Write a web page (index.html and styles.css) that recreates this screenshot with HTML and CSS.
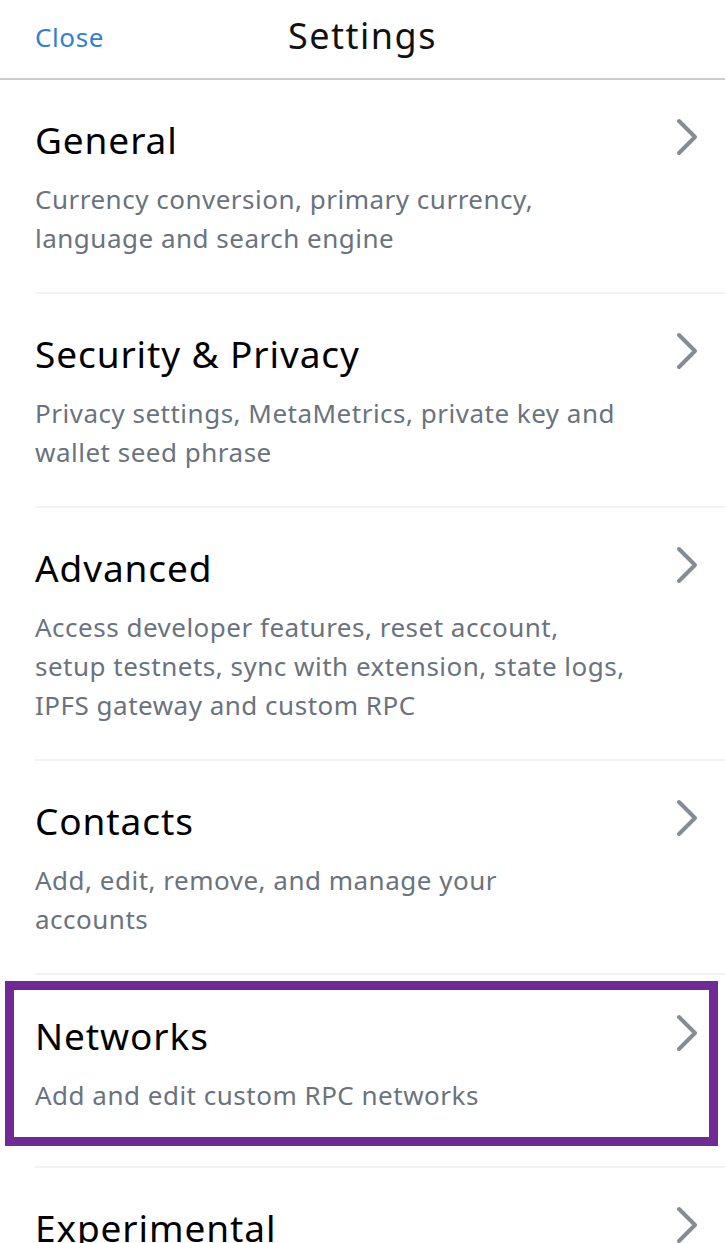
FILE: index.html
```html
<!DOCTYPE html>
<html lang="en">
<head>
<meta charset="utf-8">
<title>Settings</title>
<link rel="stylesheet" href="styles.css">
</head>
<body>
<div class="screen">
  <header class="topbar">
    <span class="close">Close</span>
    <h1 class="title">Settings</h1>
  </header>
  <main class="list">
    <div class="row">
      <div class="row-head">
        <span class="row-title">General</span>
        <svg class="chev" viewBox="0 0 24 40" width="24" height="40"><polyline points="4,4 20,20 4,36" fill="none" stroke="#848c96" stroke-width="4" stroke-linecap="round" stroke-linejoin="round"/></svg>
      </div>
      <p class="row-desc">Currency conversion, primary currency,<br>language and search engine</p>
    </div>
    <div class="row">
      <div class="row-head">
        <span class="row-title">Security &amp; Privacy</span>
        <svg class="chev" viewBox="0 0 24 40" width="24" height="40"><polyline points="4,4 20,20 4,36" fill="none" stroke="#848c96" stroke-width="4" stroke-linecap="round" stroke-linejoin="round"/></svg>
      </div>
      <p class="row-desc">Privacy settings, MetaMetrics, private key and<br>wallet seed phrase</p>
    </div>
    <div class="row">
      <div class="row-head">
        <span class="row-title">Advanced</span>
        <svg class="chev" viewBox="0 0 24 40" width="24" height="40"><polyline points="4,4 20,20 4,36" fill="none" stroke="#848c96" stroke-width="4" stroke-linecap="round" stroke-linejoin="round"/></svg>
      </div>
      <p class="row-desc">Access developer features, reset account,<br>setup testnets, sync with extension, state logs,<br>IPFS gateway and custom RPC</p>
    </div>
    <div class="row">
      <div class="row-head">
        <span class="row-title">Contacts</span>
        <svg class="chev" viewBox="0 0 24 40" width="24" height="40"><polyline points="4,4 20,20 4,36" fill="none" stroke="#848c96" stroke-width="4" stroke-linecap="round" stroke-linejoin="round"/></svg>
      </div>
      <p class="row-desc">Add, edit, remove, and manage your<br>accounts</p>
    </div>
    <div class="row row-highlight">
      <div class="highlight"></div>
      <div class="row-head">
        <span class="row-title">Networks</span>
        <svg class="chev" viewBox="0 0 24 40" width="24" height="40"><polyline points="4,4 20,20 4,36" fill="none" stroke="#848c96" stroke-width="4" stroke-linecap="round" stroke-linejoin="round"/></svg>
      </div>
      <p class="row-desc">Add and edit custom RPC networks</p>
    </div>
    <div class="row">
      <div class="row-head">
        <span class="row-title">Experimental</span>
        <svg class="chev" viewBox="0 0 24 40" width="24" height="40"><polyline points="4,4 20,20 4,36" fill="none" stroke="#848c96" stroke-width="4" stroke-linecap="round" stroke-linejoin="round"/></svg>
      </div>
      <p class="row-desc">Enable experimental features</p>
    </div>
  </main>
</div>
</body>
</html>
```
FILE: styles.css
```css
html, body {
  margin: 0;
  padding: 0;
  background: #ffffff;
}
body {
  font-family: "Noto Sans", "Open Sans", sans-serif;
  width: 725px;
  height: 1243px;
  overflow: hidden;
}
.screen {
  width: 725px;
}
.topbar {
  position: relative;
  height: 78px;
  border-bottom: 2px solid #cccccc;
  display: flex;
  align-items: center;
  justify-content: center;
}
.close {
  position: absolute;
  left: 35px;
  top: 19px;
  font-size: 26px;
  line-height: 36px;
  letter-spacing: 0.6px;
  color: #2f7fd6;
}
.title {
  margin: 0 0 6px 0;
  font-weight: 400;
  font-size: 36px;
  line-height: 44px;
  letter-spacing: 1.5px;
  color: #111111;
}
.list {
  display: flex;
  flex-direction: column;
}
.row {
  position: relative;
  margin-left: 35px;
  padding: 37px 0 34px 0;
  border-bottom: 2px solid #f1f2f3;
}
.row-highlight {
  padding-top: 38px;
  padding-bottom: 51px;
}
.highlight {
  position: absolute;
  left: -30px;
  right: 7px;
  top: 6px;
  bottom: 20px;
  border: 9px solid #6f2a96;
  pointer-events: none;
}
.row-head {
  display: flex;
  justify-content: space-between;
  align-items: center;
  height: 46px;
  padding-right: 26px;
}
.row-title {
  font-size: 37px;
  line-height: 46px;
  letter-spacing: 0.9px;
  color: #000000;
}
.chev {
  display: block;
  margin-top: -6px;
}
.row-desc {
  margin: 17px 0 0 0;
  font-size: 26px;
  line-height: 39px;
  letter-spacing: 0.5px;
  color: #6a737d;
}
```
